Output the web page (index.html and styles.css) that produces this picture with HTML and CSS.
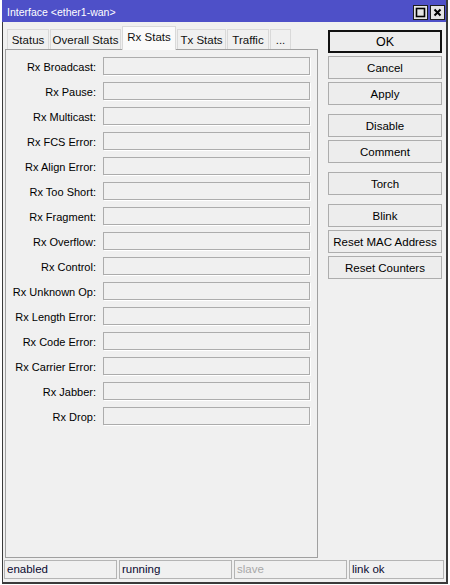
FILE: index.html
```html
<!DOCTYPE html>
<html lang="en">
<head>
  <meta charset="UTF-8" />
  <meta name="viewport" content="width=device-width, initial-scale=1.0" />
  <title>Interface &lt;ether1-wan&gt;</title>
  <link rel="stylesheet" href="styles.css">
</head>
<body>
  <div class="window">
    <div class="titlebar">
      <span class="title">Interface &lt;ether1-wan&gt;</span>
      <div class="win-buttons">
        <span class="win-btn">
          <svg width="11" height="11" viewBox="0 0 11 11"><rect x="1.5" y="1.5" width="8" height="8" fill="none" stroke="#000" stroke-width="1.6"/></svg>
        </span>
        <span class="win-btn">
          <svg width="11" height="11" viewBox="0 0 11 11"><path d="M2.5 2.5 L8.5 8.5 M8.5 2.5 L2.5 8.5" stroke="#000" stroke-width="2"/></svg>
        </span>
      </div>
    </div>

    <div class="main">
      <div class="left">
        <div class="tabs">
          <div class="tab" style="width:42px">Status</div>
          <div class="tab" style="width:71px">Overall Stats</div>
          <div class="tab active" style="width:54px">Rx Stats</div>
          <div class="tab" style="width:49px">Tx Stats</div>
          <div class="tab" style="width:42px">Traffic</div>
          <div class="tab" style="width:21px">...</div>
        </div>
        <div class="panel" id="fields"></div>
      </div>

      <div class="buttons">
        <div class="group">
          <button class="btn default">OK</button>
          <button class="btn">Cancel</button>
          <button class="btn">Apply</button>
        </div>
        <div class="group">
          <button class="btn">Disable</button>
          <button class="btn">Comment</button>
        </div>
        <div class="group">
          <button class="btn">Torch</button>
        </div>
        <div class="group">
          <button class="btn">Blink</button>
          <button class="btn">Reset MAC Address</button>
          <button class="btn">Reset Counters</button>
        </div>
      </div>
    </div>

    <div class="statusbar">
      <div class="cell">enabled</div>
      <div class="cell">running</div>
      <div class="cell muted">slave</div>
      <div class="cell last">link ok</div>
    </div>
  </div>

  <script>
    const labels = [
      'Rx Broadcast', 'Rx Pause', 'Rx Multicast', 'Rx FCS Error', 'Rx Align Error',
      'Rx Too Short', 'Rx Fragment', 'Rx Overflow', 'Rx Control', 'Rx Unknown Op',
      'Rx Length Error', 'Rx Code Error', 'Rx Carrier Error', 'Rx Jabber', 'Rx Drop'
    ];

    const panel = document.getElementById('fields');
    labels.forEach(text => {
      const row = document.createElement('div');
      row.className = 'row';
      row.innerHTML = `<label>${text}:</label><div class="field"></div>`;
      panel.appendChild(row);
    });
  </script>
</body>
</html>
```

FILE: styles.css
```css
html, body {
  margin: 0;
  padding: 0;
  background: #fff;
  font-family: 'Liberation Sans', Arial, sans-serif;
  font-size: 11px;
  color: #000;
}

.window {
  width: 446px;
  height: 584px;
  margin-left: 2px;
  box-sizing: border-box;
  border-left: 1px solid #3a3a3a;
  border-right: 2px solid #3a3a3a;
  border-bottom: 2px solid #3a3a3a;
  background: #f0f0f0;
  display: flex;
  flex-direction: column;
}

.titlebar {
  height: 22px;
  flex: none;
  background: #4e50c8;
  display: flex;
  align-items: center;
  justify-content: space-between;
  padding: 0 1px 0 5px;
  margin-left: -1px;
}

.title {
  color: #fff;
  font-size: 10.5px;
  padding-top: 1px;
}

.win-buttons {
  display: flex;
  gap: 2px;
  padding-top: 3px;
}

.win-btn {
  width: 13px;
  height: 13px;
  background: #e4e4e4;
  border: 1px solid #1e1e1e;
  display: flex;
  align-items: center;
  justify-content: center;
}

.main {
  flex: 1;
  display: flex;
  padding: 4px 4px 0 2px;
  gap: 10px;
  min-height: 0;
}

.left {
  width: 313px;
  display: flex;
  flex-direction: column;
}

.tabs {
  height: 23px;
  display: flex;
  align-items: flex-end;
  padding-left: 2px;
  gap: 1px;
}

.tab {
  height: 20px;
  box-sizing: border-box;
  border: 1px solid #d9d9d9;
  border-bottom: none;
  background: #f0f0f0;
  display: flex;
  align-items: center;
  justify-content: center;
  white-space: nowrap;
  font-size: 11.5px;
  color: #111;
}

.tab.active {
  height: 24px;
  margin-bottom: -1px;
  background: #fafafa;
  position: relative;
  padding-bottom: 3px;
}

.panel {
  flex: 1;
  border: 1px solid #a0a0a0;
  padding: 7px 0 0 0;
  display: flex;
  flex-direction: column;
  gap: 7px;
}

.row {
  display: grid;
  grid-template-columns: 90px 207px;
  column-gap: 7px;
  align-items: center;
}

.row label {
  text-align: right;
  white-space: nowrap;
  font-size: 11px;
  padding-top: 1px;
}

.field {
  height: 18px;
  box-sizing: border-box;
  border: 1px solid #acacac;
  background: #f0f0f0;
  box-shadow: 1px 1px 0 #fff;
}

.buttons {
  width: 114px;
  padding-top: 4px;
  display: flex;
  flex-direction: column;
  gap: 9px;
}

.group {
  display: flex;
  flex-direction: column;
  gap: 3px;
}

.btn {
  height: 23px;
  margin: 0;
  padding: 0;
  border: 1px solid #adadad;
  background: #ededed;
  font-family: 'Liberation Sans', Arial, sans-serif;
  font-size: 11.5px;
  color: #000;
}

.btn.default {
  border: 2px solid #111;
  font-size: 12.5px;
}

.statusbar {
  flex: none;
  height: 19px;
  margin: 2px 0 3px;
  padding: 0 2px 0 1px;
  display: flex;
  gap: 2px;
}

.cell {
  width: 113px;
  box-sizing: border-box;
  border: 1px solid #b4b4b4;
  padding: 2px 0 0 2px;
  font-size: 11.5px;
  color: #0a0a30;
}

.cell.muted {
  color: #a8a8a8;
}

.cell.last {
  width: auto;
  flex: 1;
}
```
